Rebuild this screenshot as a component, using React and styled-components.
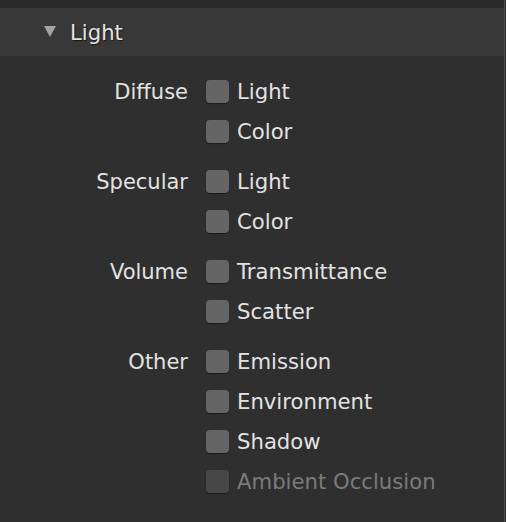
import React from "react";
import styled, { createGlobalStyle } from "styled-components";

const Global = createGlobalStyle`
  html, body { margin: 0; padding: 0; background: #2f2f2f; }
  body { font-family: "DejaVu Sans", sans-serif; }
`;

const Frame = styled.div`
  width: 506px;
  height: 522px;
  display: flex;
  background: #2a2a2a;
  overflow: hidden;
`;

const Main = styled.div`
  flex: 1;
  display: flex;
  flex-direction: column;
  background: #2f2f2f;
  border-right: 1px solid #4d4d4d;
  margin-right: 1px;
`;

const TopStrip = styled.div`
  height: 8px;
  background: #2a2a2a;
`;

const Header = styled.div`
  height: 48px;
  background: #383838;
  display: flex;
  align-items: center;
  padding-left: 44px;
  padding-top: 1px;
  box-sizing: border-box;
  gap: 14px;
  color: #e2e2e2;
  font-size: 21.2px;
  text-shadow: 1px 1px 1px rgba(0, 0, 0, 0.6);
`;

const Triangle = styled.span`
  width: 0;
  height: 0;
  border-left: 6px solid transparent;
  border-right: 6px solid transparent;
  border-top: 11px solid #a3a3a3;
  margin-top: -2px;
`;

const Body = styled.div`
  padding-top: 15px;
  display: flex;
  flex-direction: column;
  gap: 10px;
`;

const Group = styled.div`
  display: grid;
  grid-template-columns: 188px 1fr;
  column-gap: 18px;
`;

const Label = styled.div`
  grid-column: 1;
  grid-row: 1;
  height: 40px;
  line-height: 40px;
  padding-top: 1px;
  box-sizing: border-box;
  text-align: right;
  color: #e2e2e2;
  font-size: 21px;
`;

const Items = styled.div`
  grid-column: 2;
  grid-row: 1 / span 10;
  display: flex;
  flex-direction: column;
`;

const Item = styled.div`
  height: 40px;
  display: flex;
  align-items: center;
  gap: 8px;
  color: ${(p) => (p.$disabled ? "#7b7b7b" : "#e2e2e2")};
  font-size: 21.2px;
`;

const Box = styled.span`
  width: 23px;
  height: 23px;
  border-radius: 4px;
  background: ${(p) => (p.$disabled ? "#474747" : "#656565")};
  box-shadow: 0 1px 1px rgba(0, 0, 0, 0.45);
  flex: none;
`;

const groups = [
  { label: "Diffuse", items: ["Light", "Color"] },
  { label: "Specular", items: ["Light", "Color"] },
  { label: "Volume", items: ["Transmittance", "Scatter"] },
  {
    label: "Other",
    items: ["Emission", "Environment", "Shadow", { text: "Ambient Occlusion", disabled: true }],
  },
];

export default function App() {
  return (
    <>
      <Global />
      <Frame>
        <Main>
          <TopStrip />
          <Header>
            <Triangle />
            <span>Light</span>
          </Header>
          <Body>
            {groups.map((g) => (
              <Group key={g.label}>
                <Label>{g.label}</Label>
                <Items>
                  {g.items.map((it) => {
                    const text = typeof it === "string" ? it : it.text;
                    const disabled = typeof it !== "string" && it.disabled;
                    return (
                      <Item key={text} $disabled={disabled}>
                        <Box $disabled={disabled} />
                        {text}
                      </Item>
                    );
                  })}
                </Items>
              </Group>
            ))}
          </Body>
        </Main>
      </Frame>
    </>
  );
}
